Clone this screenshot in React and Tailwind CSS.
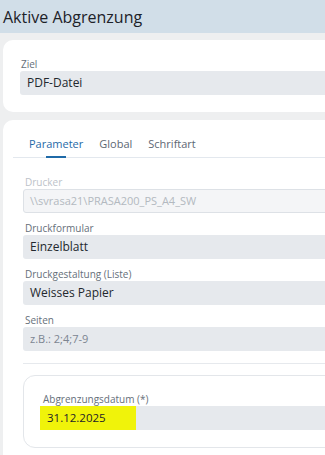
export default function App() {
  const fields = [
    { label: 'Druckformular', value: 'Einzelblatt' },
    { label: 'Druckgestaltung (Liste)', value: 'Weisses Papier' },
  ];

  return (
    <div className="w-[325px] h-[455px] overflow-hidden bg-[#eeeff0] font-['Open_Sans','Noto_Sans',sans-serif]">
      {/* Header */}
      <header className="h-[33px] bg-[#d1dee8] flex items-center px-[3px]">
        <h1 className="text-[16px] text-[#1d2228]">Aktive Abgrenzung</h1>
      </header>

      <div className="pl-[3px] pt-[7px] flex flex-col gap-[8px] w-[380px]">
        {/* Ziel */}
        <section className="bg-white rounded-[10px] px-[17px] pt-[17px] pb-[17px]">
          <div className="text-[10px] leading-[14px] text-[#666f7a] pl-[1px]">Ziel</div>
          <div className="h-[24px] bg-[#e6e9ed] rounded-[3px] flex items-center px-[7px] text-[12px] text-[#23282e]">
            PDF-Datei
          </div>
        </section>

        {/* Parameter */}
        <section className="bg-white rounded-t-[10px] px-[10px] pt-[16px] pb-[20px]">
          <nav className="flex border-b border-[#e3e8ee] px-[16px] gap-[16px] text-[11px] leading-[16px]">
            <div className="relative pb-[5px] text-[#1f6aa8]">
              Parameter
              <span className="absolute left-1/2 -translate-x-1/2 bottom-[-1px] w-[20px] h-[2px] bg-[#1f6aa8]" />
            </div>
            <div className="pb-[5px] text-[#5d6773]">Global</div>
            <div className="pb-[5px] text-[#5d6773]">Schriftart</div>
          </nav>

          <div className="px-[10px] pt-[17px] flex flex-col gap-[8px]">
            <div>
              <div className="text-[10px] leading-[14px] text-[#bcc2c9] pl-[2px]">Drucker</div>
              <div className="h-[24px] bg-[#f4f5f7] border border-[#dde1e6] rounded-[3px] flex items-center px-[6px] text-[11px] text-[#b3b9c0]">
                \\svrasa21\PRASA200_PS_A4_SW
              </div>
            </div>
            {fields.map((f) => (
              <div key={f.label}>
                <div className="text-[10px] leading-[14px] text-[#666f7a] pl-[2px]">{f.label}</div>
                <div className="h-[24px] bg-[#e6e9ed] rounded-[3px] flex items-center px-[7px] text-[12px] text-[#23282e]">
                  {f.value}
                </div>
              </div>
            ))}
            <div>
              <div className="text-[10px] leading-[14px] text-[#666f7a] pl-[2px]">Seiten</div>
              <div className="h-[24px] bg-[#e6e9ed] rounded-[3px] flex items-center px-[7px] text-[11px] text-[#7c8591]">
                z.B.: 2;4;7-9
              </div>
            </div>

            <hr className="mt-[4px] border-t border-[#e6e9ed]" />

            <div className="mt-[3px] border border-[#e3e6ea] rounded-[12px] px-[16px] pt-[16px] pb-[17px]">
              <div className="text-[10px] leading-[14px] text-[#666f7a] pl-[3px]">Abgrenzungsdatum (*)</div>
              <div className="relative h-[24px] bg-[#e6e9ed] rounded-[3px] flex items-center px-[7px] text-[11.5px] text-[#1d2228]">
                <span className="absolute left-0 top-0 w-[96px] h-[24px] bg-[#f0f30a]" />
                <span className="relative">31.12.2025</span>
              </div>
            </div>
          </div>
        </section>
      </div>
    </div>
  );
}
